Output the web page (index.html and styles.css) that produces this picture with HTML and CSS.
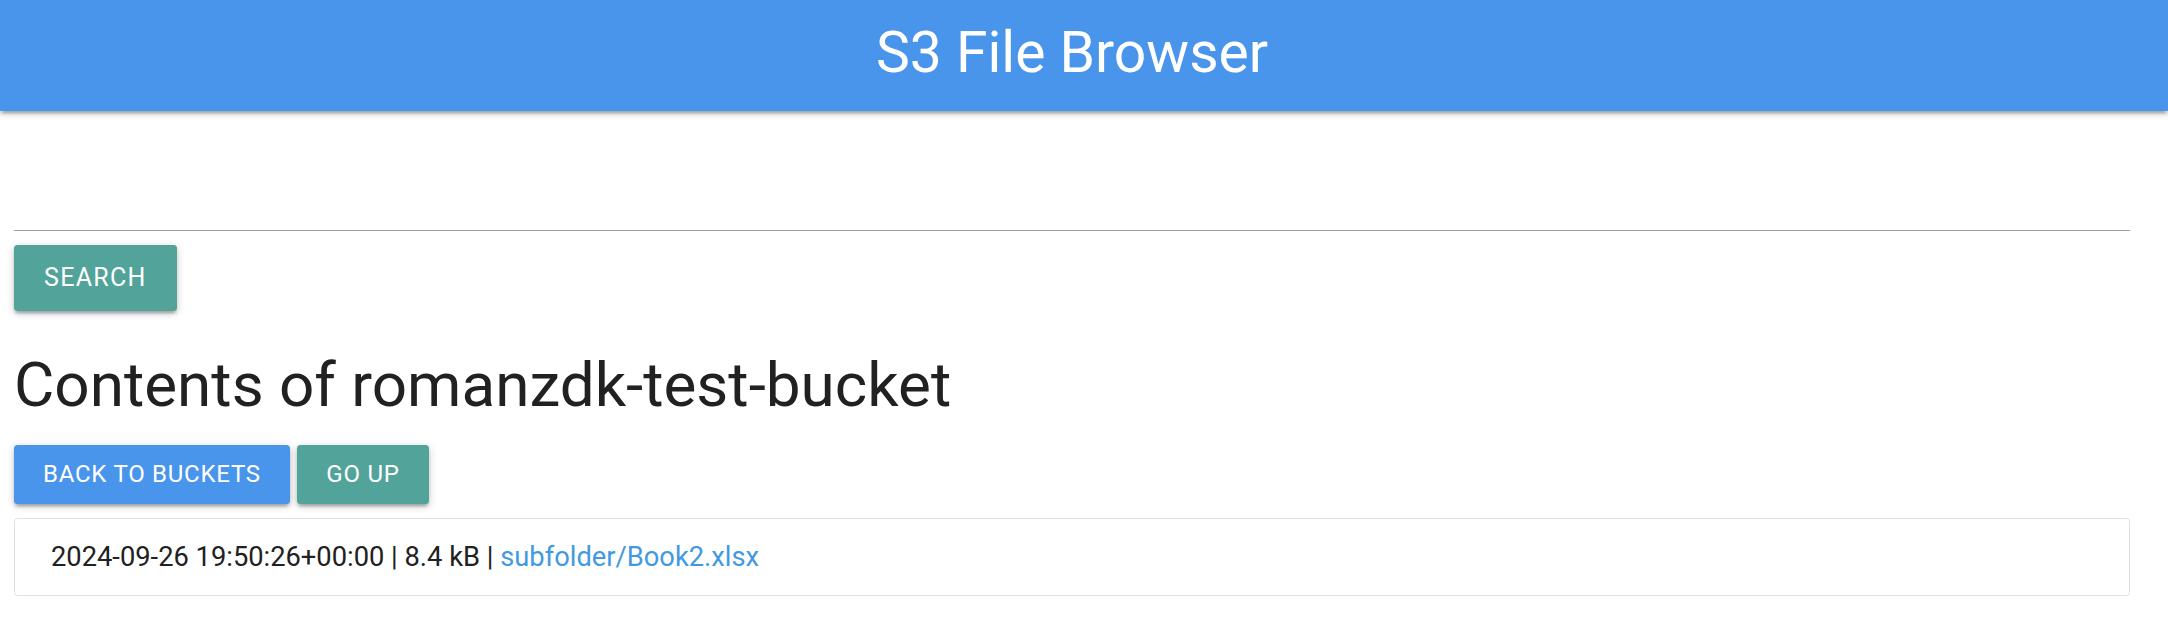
FILE: index.html
```html
<!DOCTYPE html>
<html lang="en">
<head>
<meta charset="utf-8">
<title>S3 File Browser</title>
<link rel="stylesheet" href="styles.css">
</head>
<body>
<header class="topbar">
  <div class="brand">S3 File Browser</div>
</header>
<main class="page">
  <div class="search-field">
    <input class="search-input" type="text" aria-label="Search">
  </div>
  <button class="btn btn-teal btn-search">Search</button>
  <h1 class="heading">Contents of romanzdk-test-bucket</h1>
  <div class="actions">
    <button class="btn btn-blue">Back to Buckets</button>
    <button class="btn btn-teal">Go Up</button>
  </div>
  <ul class="collection">
    <li class="collection-item">2024-09-26 19:50:26+00:00 | 8.4 kB | <a class="file-link" href="#">subfolder/Book2.xlsx</a></li>
  </ul>
</main>
</body>
</html>
```

FILE: styles.css
```css
html, body {
  margin: 0;
  padding: 0;
  background: #ffffff;
}

body {
  font-family: Roboto, "Noto Sans", "Liberation Sans", sans-serif;
  color: #212121;
}

.topbar {
  height: 111px;
  background: #4a95ec;
  box-shadow: 0 3px 3px 0 rgba(0, 0, 0, 0.14), 0 5px 2px -3px rgba(0, 0, 0, 0.12), 0 2px 8px 0 rgba(0, 0, 0, 0.2);
  display: flex;
  justify-content: center;
  padding-right: 24px;
}

.brand {
  color: #ffffff;
  font-size: 57px;
  line-height: 106px;
  font-weight: 400;
}

.page {
  padding: 0 38px 0 14px;
}

.search-field {
  padding-top: 36px;
}

.search-input {
  display: block;
  width: 100%;
  box-sizing: content-box;
  height: 83px;
  padding: 0;
  margin: 0;
  border: none;
  border-bottom: 1px solid #9e9e9e;
  outline: none;
  background: transparent;
  font-family: inherit;
  font-size: 27px;
}

.btn {
  font-family: inherit;
  border: none;
  border-radius: 3.5px;
  color: #ffffff;
  text-transform: uppercase;
  font-size: 24px;
  letter-spacing: 0.75px;
  padding: 0 29px;
  height: 59px;
  line-height: 59px;
  cursor: pointer;
  box-shadow: 0 3px 3px 0 rgba(0, 0, 0, 0.14), 0 5px 2px -3px rgba(0, 0, 0, 0.12), 0 2px 8px 0 rgba(0, 0, 0, 0.2);
}

.btn-teal {
  background: #52a49a;
}

.btn-blue {
  background: #4a95ec;
}

.btn-search {
  display: block;
  margin-top: 14px;
  height: 66px;
  line-height: 66px;
  padding: 0 30px;
  font-size: 25px;
  letter-spacing: 1.3px;
}

.heading {
  margin: 40px 0 0;
  font-size: 62px;
  line-height: 68px;
  font-weight: 400;
  color: #212121;
}

.actions {
  display: flex;
  gap: 7.5px;
  margin-top: 26px;
}

.collection {
  list-style: none;
  margin: 14px 0 0;
  padding: 0;
  border: 1px solid #e0e0e0;
  border-radius: 3.5px;
}

.collection-item {
  padding: 17px 36px;
  font-size: 27.3px;
  line-height: 42px;
  color: #212121;
}

.file-link {
  color: #4299e1;
  text-decoration: none;
}
```
